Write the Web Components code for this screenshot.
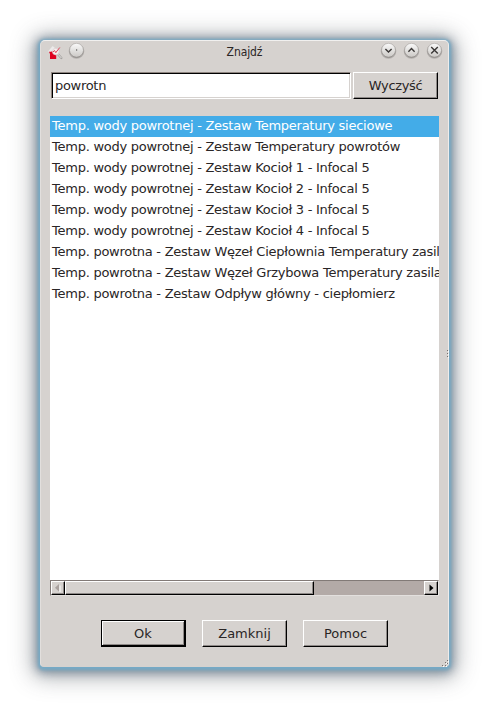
<!DOCTYPE html>
<html lang="pl">
<head>
<meta charset="utf-8">
<title>Znajdź</title>
<style>
body{margin:0;background:#fff;width:489px;height:707px;overflow:hidden;font:13px "DejaVu Sans",sans-serif;color:#2a2626}
</style>
</head>
<body>
<find-dialog></find-dialog>
<script>
const define=(name,html,setup)=>customElements.define(name,class extends HTMLElement{
  constructor(){super();this.attachShadow({mode:'open'}).innerHTML=html;}
  connectedCallback(){if(setup)setup(this,this.shadowRoot);}
});

define('push-button',`<style>
:host{display:flex;box-sizing:border-box;width:85px;height:27px;align-items:center;justify-content:center;background:#d6d2cf;
border:1px solid;border-color:#fff #000 #000 #fff;box-shadow:inset -1px -1px #8e8987;line-height:15px}
:host([default]){border-color:#000;border-width:1px 2px 2px 1px;box-shadow:inset 1px 1px #fff,inset -1px -1px #8e8987}
:host([tight]){letter-spacing:-.35px}
span{display:block}
</style><span><slot></slot></span>`);

define('text-field',`<style>
:host{display:flex;box-sizing:border-box;width:300px;height:27px;align-items:center;background:#fff;border:1px solid;border-color:#8e8580 #fff #fff #8e8580;
box-shadow:inset 1px 1px #000,inset -1px -1px #d6d2cf;padding-left:3px;line-height:15px;letter-spacing:-.3px}
</style><span><slot></slot></span>`);

define('list-row',`<style>
:host{display:block;height:21px;line-height:20px;padding-left:2px;white-space:nowrap;overflow:hidden;letter-spacing:-.255px}
:host([selected]){background:#43ace8;color:#fff}
</style><slot></slot>`);

define('round-button',`<style>
:host{display:block;width:17px;height:18px}
svg{display:block;overflow:visible}
</style><svg width="17" height="18" viewBox="0 0 17 18"><defs><linearGradient id="g" x2="0" y2="1"><stop stop-color="#fafafa"/><stop offset="1" stop-color="#cbc8c5"/></linearGradient>
<linearGradient id="e" x2="0" y2="1"><stop stop-color="#bdb9b6"/><stop offset="1" stop-color="#817d7a"/></linearGradient></defs>
<circle cx="8.5" cy="8.9" r="7.8" fill="#8a8683" opacity=".45"/><circle cx="8.5" cy="8.3" r="7" fill="url(#g)" stroke="url(#e)" stroke-width=".8"/>
<path fill="none" stroke="#3a3736" stroke-width="1.4"/></svg>`,(el,root)=>{
  const d={dot:'M8 8h1.2',down:'M5.4 7l3.1 3.1L11.6 7',up:'M5.4 9.7l3.1-3.1 3.1 3.1',close:'M5.2 5l6.6 6.6M11.8 5l-6.6 6.6'};
  const p=root.querySelector('path');
  p.setAttribute('d',d[el.getAttribute('kind')]);
  if(el.getAttribute('kind')==='dot')p.setAttribute('stroke-width','1.2');
});

define('app-icon',`<style>:host{display:block;width:16px;height:16px}svg{display:block}</style>
<svg width="16" height="16" viewBox="0 0 16 16"><path d="M0 6.5L4.6 1 7 3 5 7.5z" fill="#eceaea"/><path d="M1 6.8h2.2L4.5 6l2.2 2.6H8.2V14H2V9z" fill="#df001f"/>
<path d="M10 9.2l3.4 3.8" stroke="#a5a2a0" stroke-width="2.2" stroke-linecap="round"/><path d="M10 9.2l3.4 3.8" stroke="#e3e1e0" stroke-width="1"/>
<circle cx="7.8" cy="6.6" r="3.3" fill="#f8eeee" stroke="#d5cfcf" stroke-width=".7"/><path d="M5 7l1.5-1.5 1.3 2.2L9 6l2.8-3.5" fill="none" stroke="#e0455a"/></svg>`);

define('title-bar',`<style>
:host{display:grid;grid-template-columns:1fr auto 1fr;height:23px;align-items:start}
div{display:flex}.left{padding:1px 0 0 7px;gap:4px}.left app-icon{margin-top:3px}
.right{justify-content:flex-end;gap:6px;padding:1px 5px 0 0}
.title{font:12px/15px "DejaVu Sans Condensed","DejaVu Sans",sans-serif;font-stretch:condensed;padding-top:4px;letter-spacing:-.1px}
</style><div class="left"><app-icon></app-icon><round-button kind="dot"></round-button></div>
<div class="title"><slot></slot></div>
<div class="right"><round-button kind="down"></round-button><round-button kind="up"></round-button><round-button kind="close"></round-button></div>`);

define('scroll-bar',`<style>
:host{display:flex;box-sizing:border-box;height:16px;background:#b3aaa7;border:1px solid;border-color:#827a77 #eae8e6 #e3e0de #827a77}
i{display:flex;box-sizing:border-box;height:14px;background:#d6d2cf;border:1px solid;border-color:#fff #000 #000 #fff;box-shadow:inset -1px -1px #8e8987;align-items:center;justify-content:center}
.a{width:14px}.t{width:249px}.r{margin-left:auto}svg{display:block}
</style><i class="a"><svg width="6" height="8"><path d="M5 1.5v6.5" stroke="#fff"/><path d="M0 3.8L4 0v7.5z" fill="#a9a19e"/></svg></i><i class="t"></i><i class="a r"><svg width="5" height="8"><path d="M0.5 0.5l4 3.5-4 3.5z" fill="#000"/></svg></i>`);

define('find-dialog',`<style>
:host{display:flex;flex-direction:column;position:relative;box-sizing:border-box;width:409px;height:627px;margin:40px;background:#d6d2cf;border-radius:5px 5px 4px 4px;
border:1px solid;border-color:#f1f0ef #eeeceb #d6d2cf #e2dfdd;
box-shadow:0 1px 3px 1.5px #76aac6,0 2px 10px 4px rgba(82,108,130,.6),0 3px 22px 8px rgba(65,70,78,.4)}
.search{display:flex;gap:2px;padding:8px 10px 0}
.list{margin:17px 9px 0;height:464px;background:#fff;overflow:hidden}
scroll-bar{margin:0 9px}
.actions{display:flex;gap:16px;padding:24px 60px 0}
.grip{position:absolute;right:-1px;bottom:-1px}.edge{position:absolute;right:-1px;top:308px}
</style>
<title-bar>Znajdź</title-bar>
<div class="search"><text-field>powrotn</text-field><push-button tight>Wyczyść</push-button></div>
<div class="list">
<list-row selected>Temp. wody powrotnej - Zestaw Temperatury sieciowe</list-row>
<list-row>Temp. wody powrotnej - Zestaw Temperatury powrotów</list-row>
<list-row>Temp. wody powrotnej - Zestaw Kocioł 1 - Infocal 5</list-row>
<list-row>Temp. wody powrotnej - Zestaw Kocioł 2 - Infocal 5</list-row>
<list-row>Temp. wody powrotnej - Zestaw Kocioł 3 - Infocal 5</list-row>
<list-row>Temp. wody powrotnej - Zestaw Kocioł 4 - Infocal 5</list-row>
<list-row>Temp. powrotna - Zestaw Węzeł Ciepłownia Temperatury zasil</list-row>
<list-row>Temp. powrotna - Zestaw Węzeł Grzybowa Temperatury zasila</list-row>
<list-row>Temp. powrotna - Zestaw Odpływ główny - ciepłomierz</list-row>
</div>
<scroll-bar></scroll-bar>
<div class="actions"><push-button default>Ok</push-button><push-button>Zamknij</push-button><push-button>Pomoc</push-button></div>
<svg class="edge" width="3" height="9"><path d="M1 1h1M1 4h1M1 7h1" transform="translate(0 .5)" stroke="#77716e"/><path d="M2 2.5h1M2 5.5h1M2 8.5h1" stroke="#fff"/></svg>
<svg class="grip" width="8" height="8"><path d="M1 6.5h1M4 6.5h1M4 3.5h1M6 4.5h1M6 1.5h1" stroke="#77716e"/><path d="M2 7.5h1M5 7.5h1M5 4.5h1M7 2.5h1" stroke="#fff"/></svg>`);
</script>
</body>
</html>
